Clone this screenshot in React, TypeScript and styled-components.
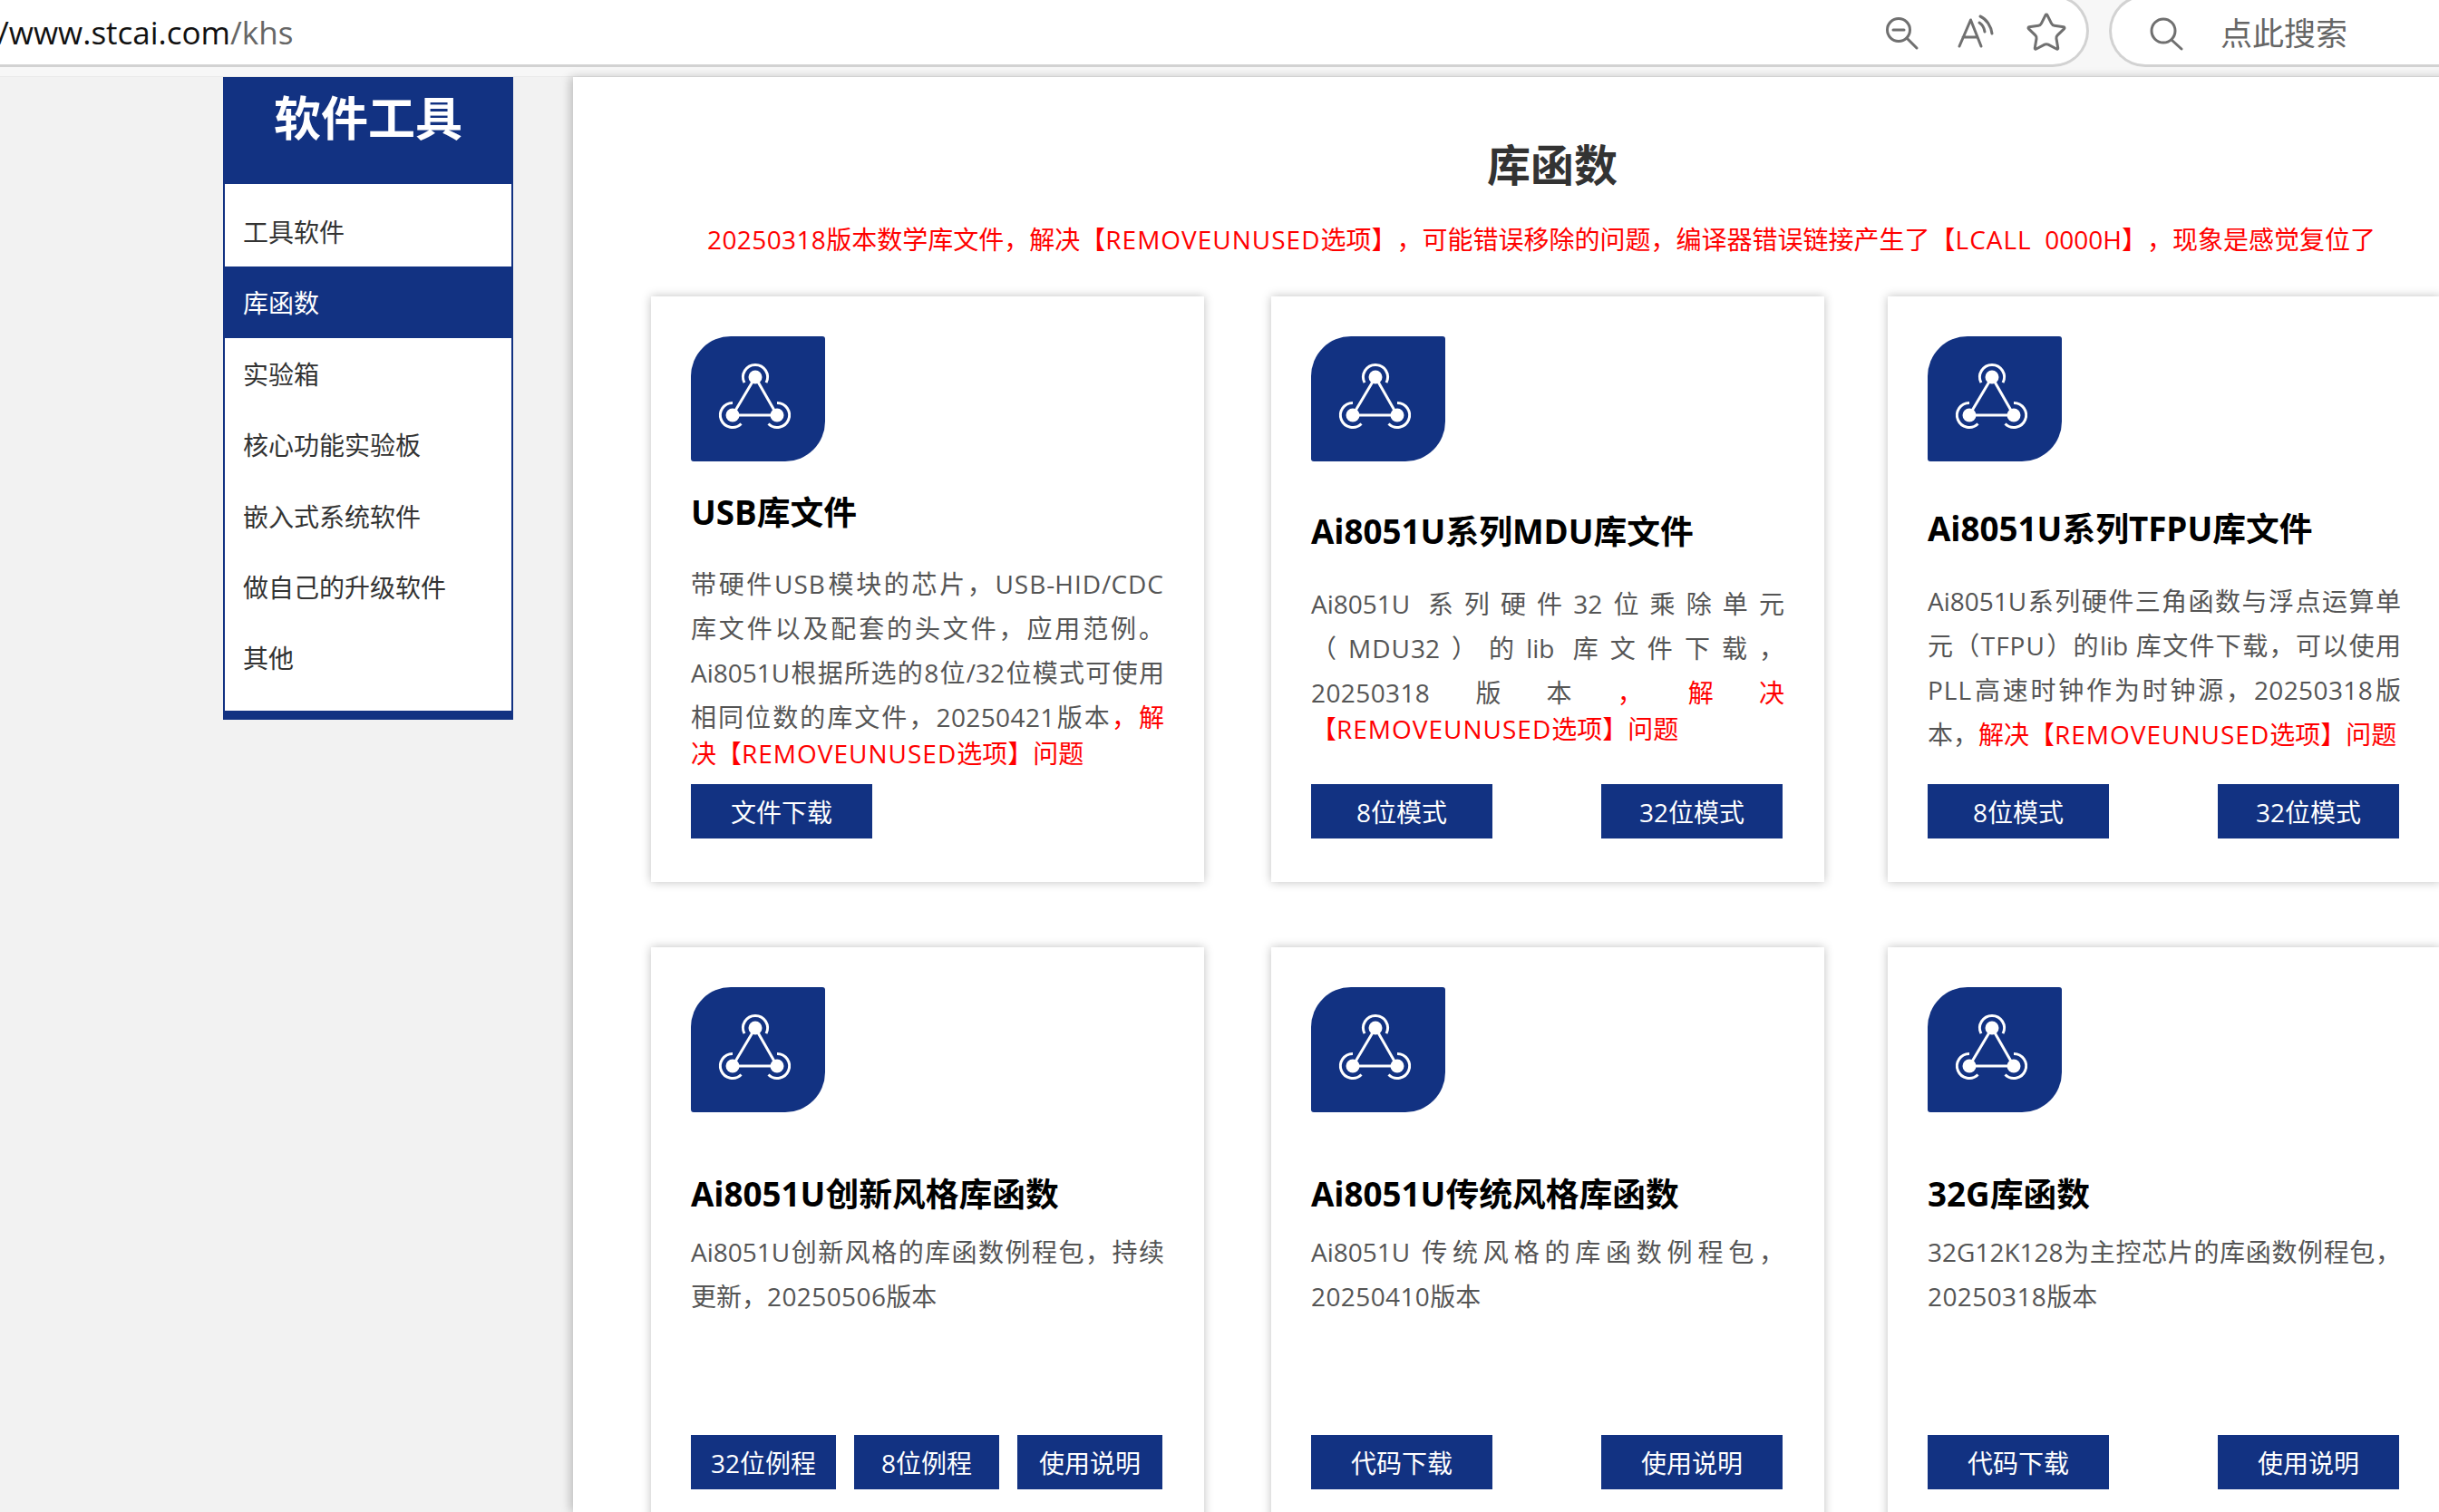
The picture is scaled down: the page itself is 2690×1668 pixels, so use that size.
import React from 'react';
import styled, { createGlobalStyle } from 'styled-components';
import { Star } from 'lucide-react';

const BLUE = '#123282';
const FONT = '"Open Sans", "Noto Sans CJK SC", sans-serif';

const GlobalStyle = createGlobalStyle`
  html, body {
    margin: 0;
    padding: 0;
    background: #f2f2f2;
    overflow: hidden;
  }
  * {
    box-sizing: border-box;
    text-spacing-trim: space-all;
  }
`;

const Page = styled.div`
  width: 2690px;
  height: 1668px;
  overflow: hidden;
  font-family: ${FONT};
`;

const Toolbar = styled.header`
  display: flex;
  gap: 22px;
  height: 85px;
  background: #f7f7f7;
  border-bottom: 1px solid #e9e9e9;
  overflow: hidden;
`;

const AddressBar = styled.div`
  flex: 0 0 2304px;
  display: flex;
  align-items: center;
  height: 80px;
  margin-top: -6px;
  padding: 6px 20px 0 0;
  background: #fff;
  border: 3px solid #d2d2d2;
  border-left: none;
  border-radius: 0 40px 40px 0;
`;

const Url = styled.span`
  margin: -4px 0 0 -3px;
  font-size: 35px;
  color: #111;
`;

const UrlPath = styled.span`
  color: #666;
`;

const ToolIcons = styled.div`
  display: flex;
  gap: 32px;
  margin: -2px 0 0 auto;
`;

const SearchBox = styled.div`
  flex: 0 0 500px;
  display: flex;
  align-items: center;
  gap: 36px;
  height: 80px;
  margin-top: -6px;
  padding: 6px 0 0 36px;
  background: #fff;
  border: 3px solid #d2d2d2;
  border-right: none;
  border-radius: 40px 0 0 40px;
  font-size: 35px;
  color: #666;
`;

const SearchLabel = styled.span`
  margin-top: -6px;
`;

const Glyph = styled.svg`
  display: block;
  width: 48px;
  height: 48px;
  fill: none;
  stroke: #707070;
  stroke-width: 3;
  stroke-linecap: round;
  stroke-linejoin: round;
`;

const Body = styled.div`
  display: flex;
  align-items: flex-start;
`;

const Sidebar = styled.aside`
  flex: 0 0 320px;
  margin-left: 246px;
`;

const SidebarTitle = styled.h2`
  height: 118px;
  margin: 0;
  padding-top: 1px;
  background: ${BLUE};
  color: #fff;
  font-size: 52px;
  font-weight: 700;
  line-height: 88px;
  text-align: center;
`;

const SideList = styled.ul`
  margin: 0;
  padding: 13px 0 19px;
  list-style: none;
  background: #fff;
  border: solid ${BLUE};
  border-width: 0 2px 10px;
`;

const SideItem = styled.li<{ $active?: boolean }>`
  height: 78.4px;
  padding-left: 20px;
  background: ${(p) => (p.$active ? BLUE : 'transparent')};
  color: ${(p) => (p.$active ? '#fff' : '#333')};
  font-size: 28px;
  line-height: 81px;
`;

const Main = styled.main`
  flex: 0 0 2160px;
  height: 1583px;
  margin-left: 66px;
  padding: 62px 0 0 86px;
  background: #fff;
  box-shadow: -3px 0 10px rgba(0, 0, 0, 0.22);
`;

const Heading = styled.h1`
  margin: 0 0 0 -86px;
  color: #333;
  font-size: 48px;
  font-weight: 700;
  line-height: 70px;
  text-align: center;
`;

const Notice = styled.p`
  margin: 27px 0 43px;
  padding-left: 62px;
  color: #f00;
  font-size: 28px;
  line-height: 40px;
  white-space: pre;
`;

const CardGrid = styled.div`
  display: grid;
  grid-template-columns: 684px 680px 610px;
  row-gap: 72px;
`;

const Card = styled.article`
  display: flex;
  flex-direction: column;
  width: 610px;
  height: 646px;
  padding: 44px 44px 48px;
  background: #fff;
  box-shadow: 0 0 10px rgba(0, 0, 0, 0.25);
`;

const IconTile = styled.div`
  flex: none;
  width: 148px;
  height: 138px;
  background: ${BLUE};
  border-radius: 44px 3px 44px 3px;
`;

const TileGlyph = styled.svg`
  display: block;
  width: 148px;
  height: 138px;
  fill: none;
  stroke: #fff;
  stroke-width: 3;
`;

const CardTitle = styled.h3<{ $top: number }>`
  margin: ${(p) => p.$top}px 0 0;
  color: #000;
  font-size: 36.75px;
  font-weight: 700;
  line-height: 50px;
  white-space: nowrap;
`;

const CardText = styled.p<{ $top: number }>`
  margin: ${(p) => p.$top}px 0 0;
  color: #f00;
  font-size: 28px;
  line-height: 30px;
  text-align: justify;
`;

const Muted = styled.span`
  color: #555;
  line-height: 49px;
`;

// caps and long numbers run a little wider in the reference font
const WideRun = styled.span<{ $caps: boolean }>`
  letter-spacing: ${(p) => (p.$caps ? 1 : 0.4)}px;
`;

const ButtonRow = styled.div<{ $spread?: boolean }>`
  display: flex;
  justify-content: ${(p) => (p.$spread ? 'space-between' : 'flex-start')};
  gap: 20px;
  margin-top: auto;
  padding-right: ${(p) => (p.$spread ? 2 : 0)}px;
`;

const ActionButton = styled.a<{ $width: number }>`
  flex: none;
  width: ${(p) => p.$width}px;
  height: 60px;
  background: ${BLUE};
  color: #fff;
  font-size: 28px;
  line-height: 63px;
  text-align: center;
`;

const ZoomOutGlyph = () => (
  <Glyph viewBox="0 0 48 48">
    <circle cx="21" cy="21" r="12.5" />
    <path d="M15 21h12M30 30l11 11" />
  </Glyph>
);

const ReadAloudGlyph = () => (
  <Glyph viewBox="0 0 48 48">
    <path d="M8 39 20.5 10 32 39M12 29h16M30 13c3 2 5.500 6 6 10M31 6c7 3 12 11 13 19" />
  </Glyph>
);

const SearchGlyph = () => (
  <Glyph viewBox="0 0 48 48">
    <circle cx="21" cy="21" r="13" />
    <path d="M30 31l11 10" />
  </Glyph>
);

const NetworkGlyph = () => (
  <TileGlyph viewBox="0 0 148 138">
    <path d="M59 51.100A13.500 13.500 0 1 1 83 51.100" />
    <path d="M46 73.500A13.500 13.500 0 1 0 55.500 96.500" />
    <path d="M95 73.500A13.500 13.500 0 1 1 85.500 96.500" />
    <path d="M71 45 46 87H95Z" strokeLinejoin="round" />
    <circle cx="71" cy="45" r="7.500" fill="#fff" stroke="none" />
    <circle cx="46" cy="87" r="7.500" fill="#fff" stroke="none" />
    <circle cx="95" cy="87" r="7.500" fill="#fff" stroke="none" />
  </TileGlyph>
);

const spaced = (text: string) =>
  text.split(/([A-Z]{3,}|\d{6,})/).map((part, i) =>
    i % 2 === 1 ? (
      <WideRun key={i} $caps={/[A-Z]/.test(part)}>
        {part}
      </WideRun>
    ) : (
      part
    ),
  );

const sideItems = ['工具软件', '库函数', '实验箱', '核心功能实验板', '嵌入式系统软件', '做自己的升级软件', '其他'];

interface CardData {
  title: string;
  titleTop: number;
  textTop: number;
  text: string;
  urgent?: string;
  buttons: string[];
  buttonWidth: number;
}

const FIX = '解决【REMOVEUNUSED选项】问题';

const cards: CardData[] = [
  {
    title: 'USB库文件',
    titleTop: 31,
    textTop: 30,
    text: '带硬件USB模块的芯片，USB-HID/CDC库文件以及配套的头文件，应用范例。Ai8051U根据所选的8位/32位模式可使用相同位数的库文件，20250421版本',
    urgent: `，${FIX}`,
    buttons: ['文件下载'],
    buttonWidth: 200,
  },
  {
    title: 'Ai8051U系列MDU库文件',
    titleTop: 52,
    textTop: 31,
    text: 'Ai8051U 系列硬件32位乘除单元（MDU32）的lib 库文件下载，20250318版本',
    urgent: `，${FIX}`,
    buttons: ['8位模式', '32位模式'],
    buttonWidth: 200,
  },
  {
    title: 'Ai8051U系列TFPU库文件',
    titleTop: 49,
    textTop: 31,
    text: 'Ai8051U系列硬件三角函数与浮点运算单元（TFPU）的lib 库文件下载，可以使用PLL高速时钟作为时钟源，20250318版本，',
    urgent: FIX,
    buttons: ['8位模式', '32位模式'],
    buttonWidth: 200,
  },
  {
    title: 'Ai8051U创新风格库函数',
    titleTop: 65,
    textTop: 15,
    text: 'Ai8051U创新风格的库函数例程包，持续更新，20250506版本',
    buttons: ['32位例程', '8位例程', '使用说明'],
    buttonWidth: 160,
  },
  {
    title: 'Ai8051U传统风格库函数',
    titleTop: 65,
    textTop: 15,
    text: 'Ai8051U 传统风格的库函数例程包，20250410版本',
    buttons: ['代码下载', '使用说明'],
    buttonWidth: 200,
  },
  {
    title: '32G库函数',
    titleTop: 65,
    textTop: 15,
    text: '32G12K128为主控芯片的库函数例程包，20250318版本',
    buttons: ['代码下载', '使用说明'],
    buttonWidth: 200,
  },
];

const NOTICE = '20250318版本数学库文件，解决【REMOVEUNUSED选项】，可能错误移除的问题，编译器错误链接产生了【LCALL  0000H】，现象是感觉复位了';

export default function App() {
  return (
    <Page>
      <GlobalStyle />
      <Toolbar>
        <AddressBar>
          <Url>
            /www.stcai.com<UrlPath>/khs</UrlPath>
          </Url>
          <ToolIcons>
            <ZoomOutGlyph />
            <ReadAloudGlyph />
            <Star size={48} color="#707070" strokeWidth={1.5} />
          </ToolIcons>
        </AddressBar>
        <SearchBox>
          <SearchGlyph />
          <SearchLabel>点此搜索</SearchLabel>
        </SearchBox>
      </Toolbar>
      <Body>
        <Sidebar>
          <SidebarTitle>软件工具</SidebarTitle>
          <SideList>
            {sideItems.map((item) => (
              <SideItem key={item} $active={item === '库函数'}>
                {item}
              </SideItem>
            ))}
          </SideList>
        </Sidebar>
        <Main>
          <Heading>库函数</Heading>
          <Notice>{spaced(NOTICE)}</Notice>
          <CardGrid>
            {cards.map((card) => (
              <Card key={card.title}>
                <IconTile>
                  <NetworkGlyph />
                </IconTile>
                <CardTitle $top={card.titleTop}>{card.title}</CardTitle>
                <CardText $top={card.textTop}>
                  <Muted>{spaced(card.text)}</Muted>
                  {card.urgent && spaced(card.urgent)}
                </CardText>
                <ButtonRow $spread={card.buttons.length === 2}>
                  {card.buttons.map((label) => (
                    <ActionButton key={label} $width={card.buttonWidth}>
                      {label}
                    </ActionButton>
                  ))}
                </ButtonRow>
              </Card>
            ))}
          </CardGrid>
        </Main>
      </Body>
    </Page>
  );
}
